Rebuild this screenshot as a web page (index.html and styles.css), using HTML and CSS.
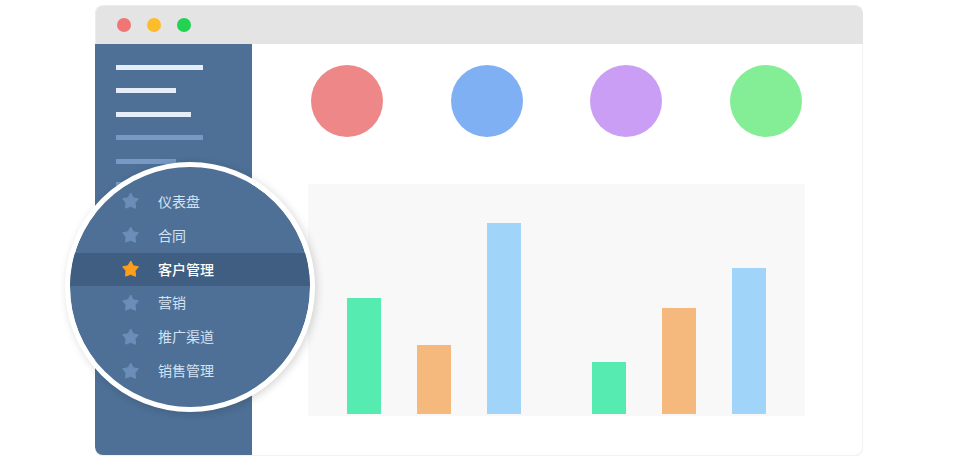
FILE: index.html
```html
<!DOCTYPE html>
<html lang="zh-CN">
<head>
<meta charset="utf-8">
<title>客户管理</title>
<link rel="stylesheet" href="styles.css">
</head>
<body>
<svg class="sprite" aria-hidden="true">
  <symbol id="star" viewBox="0 0 17 17">
    <path d="M8.8 1 L11.2 5.8 L16.4 6.8 L13 10.8 L13.6 16.3 L8.6 14.3 L3.6 16.1 L4 10.8 L.7 6.8 L6 5.8 Z" fill="currentColor" stroke="currentColor" stroke-width="1" stroke-linejoin="round"/>
  </symbol>
</svg>
<div class="stage">
  <div class="window">
    <header class="titlebar">
      <span class="dot dot-red"></span>
      <span class="dot dot-yellow"></span>
      <span class="dot dot-green"></span>
    </header>
    <div class="body">
      <aside class="sidebar">
        <div class="lines">
          <span class="line long"></span>
          <span class="line short"></span>
          <span class="line medium"></span>
          <span class="line long dim"></span>
          <span class="line short dim"></span>
          <span class="line medium dim"></span>
        </div>
      </aside>
      <main class="content">
        <div class="circles">
          <span class="circle red"></span>
          <span class="circle blue"></span>
          <span class="circle purple"></span>
          <span class="circle lime"></span>
        </div>
        <div class="chart">
          <div class="group">
            <span class="bar green" style="height:116px"></span>
            <span class="bar orange" style="height:69px"></span>
            <span class="bar sky" style="height:191px"></span>
          </div>
          <div class="group">
            <span class="bar green" style="height:52px"></span>
            <span class="bar orange" style="height:106px"></span>
            <span class="bar sky" style="height:146px"></span>
          </div>
        </div>
      </main>
    </div>
  </div>
  <nav class="lens">
    <a class="item" href="#"><svg class="icon"><use href="#star"/></svg>仪表盘</a>
    <a class="item" href="#"><svg class="icon"><use href="#star"/></svg>合同</a>
    <a class="item active" href="#" aria-current="page"><svg class="icon"><use href="#star"/></svg>客户管理</a>
    <a class="item" href="#"><svg class="icon"><use href="#star"/></svg>营销</a>
    <a class="item" href="#"><svg class="icon"><use href="#star"/></svg>推广渠道</a>
    <a class="item" href="#"><svg class="icon"><use href="#star"/></svg>销售管理</a>
  </nav>
</div>
</body>
</html>
```
FILE: styles.css
```css
* {
  box-sizing: border-box;
}

body {
  margin: 0;
  background: #fff;
  font-family: "Noto Sans CJK SC", sans-serif;
}

.sprite {
  display: none;
}

.stage {
  position: relative;
  display: flex;
  min-height: 100vh;
  padding: 5px 117px 4px 95px;
}

.window {
  flex: 1;
  display: flex;
  flex-direction: column;
  border-radius: 8px;
  overflow: hidden;
  background: #fff;
  box-shadow: inset 0 0 0 1px #f2f2f2, inset 0 -1px 0 #e8e8e8;
}

.titlebar {
  display: flex;
  align-items: center;
  gap: 16px;
  height: 39px;
  padding: 0 21px;
  background: #e4e4e4;
  border: 1px solid #ededed;
  border-width: 1px 0 0 1px;
  border-radius: 8px 8px 0 0;
}

.dot {
  width: 14px;
  height: 14px;
  border-radius: 50%;
}

.dot-red {
  background: #f07575;
}

.dot-yellow {
  background: #fdbd2a;
}

.dot-green {
  background: #23d153;
}

.body {
  flex: 1;
  display: flex;
}

.sidebar {
  width: 157px;
  margin-bottom: 1px;
  padding: 21px;
  background: #4e7096;
  border-radius: 0 0 0 8px;
}

.lines {
  display: flex;
  flex-direction: column;
  justify-content: space-between;
  height: 122px;
}

.line {
  height: 5px;
  background: #e5edf8;
}

.line.dim {
  background: #7799c4;
}

.long {
  width: 87px;
}

.short {
  width: 60px;
}

.medium {
  width: 75px;
}

.content {
  flex: 1;
  display: flex;
  flex-direction: column;
  gap: 47px;
  padding: 21px 58px 40px 56px;
}

.circles {
  display: flex;
  justify-content: space-between;
  padding: 0 3px;
}

.circle {
  width: 72px;
  height: 72px;
  border-radius: 50%;
}

.red {
  background: #ee8787;
}

.blue {
  background: #7fb0f3;
}

.purple {
  background: #cb9ef5;
}

.lime {
  background: #84ee97;
}

.chart {
  flex: 1;
  display: flex;
  justify-content: space-between;
  align-items: flex-end;
  padding: 0 39px 2px;
  background: #f8f8f8;
}

.group {
  display: flex;
  align-items: flex-end;
  gap: 36px;
}

.bar {
  width: 34px;
}

.green {
  background: #56ecb1;
}

.orange {
  background: #f6b97d;
}

.sky {
  background: #a0d4f9;
}

.lens {
  position: absolute;
  left: 65px;
  top: 162px;
  display: grid;
  grid-auto-rows: 1fr;
  width: 250px;
  height: 250px;
  padding: 18px 0 19px;
  overflow: hidden;
  border: 5px solid #fff;
  border-radius: 50%;
  background: #4e7096 padding-box;
  box-shadow: 2px 2px 8px rgba(0, 0, 0, 0.16);
}

.item {
  display: flex;
  align-items: center;
  gap: 19px;
  padding: 0 0 2px 52px;
  color: #d3e2f4;
  font-size: 14px;
  line-height: 20px;
  text-decoration: none;
}

.icon {
  width: 17px;
  height: 17px;
  color: #6a8eb8;
}

.active {
  background: #3f5e82;
  color: #fff;
  font-weight: 500;
}

.active .icon {
  color: #ff9e1b;
}
```
